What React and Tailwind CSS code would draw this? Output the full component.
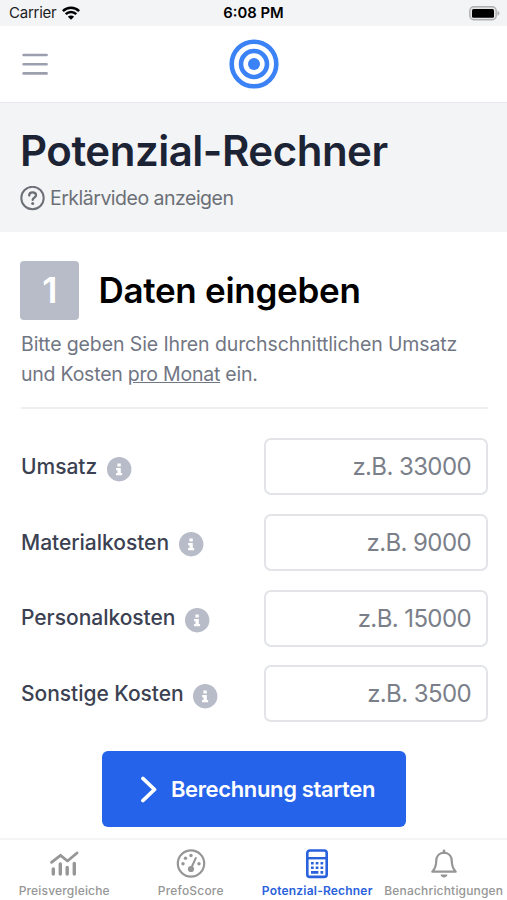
import React from 'react';

const fields = [
  { label: 'Umsatz', placeholder: 'z.B. 33000' },
  { label: 'Materialkosten', placeholder: 'z.B. 9000' },
  { label: 'Personalkosten', placeholder: 'z.B. 15000' },
  { label: 'Sonstige Kosten', placeholder: 'z.B. 3500' },
];

function StatusBar() {
  return (
    <div className="grid grid-cols-3 items-center h-[26px] pl-[9px] pr-[7px] pt-px bg-[#f3f4f6] text-[15px] text-[#1c1c1e]">
      <div className="flex items-center gap-[6px]">
        <span className="tracking-[-0.25px]">Carrier</span>
        <svg className="-mt-px" width="18" height="14" viewBox="0 0 18 14" fill="none" stroke="#000" strokeWidth="2.5">
          <path d="M.9 5.1a11.5 11.5 0 0 1 16.2 0" />
          <path d="M3.7 8.1a7.6 7.6 0 0 1 10.6 0" />
          <path d="M9 13.8 5.9 10.7a4.4 4.4 0 0 1 6.2 0z" fill="#000" stroke="none" />
        </svg>
      </div>
      <span className="-ml-[2px] text-center font-semibold text-[14.8px] text-black whitespace-nowrap">6:08 PM</span>
      <div className="flex justify-end">
        <svg width="31" height="15" viewBox="0 0 31 15">
          <rect x=".8" y=".8" width="26.4" height="13" rx="4" fill="#e5e5e7" stroke="#b0b0b2" strokeWidth="1.4" />
          <rect x="3" y="3" width="22" height="8.8" rx="1.5" fill="#000" />
          <path d="M28.5 4.8c2.6 1 2.6 4 0 5z" fill="#b0b0b2" />
        </svg>
      </div>
    </div>
  );
}

function Header() {
  return (
    <header className="grid grid-cols-3 items-center h-[77px] px-[21px] border-b border-[#e5e7eb] bg-white">
      <svg width="28" height="24" viewBox="0 0 28 24" stroke="#9ca0ae" strokeWidth="2.6" strokeLinecap="round">
        <path d="M2.6 3h23M2.6 12.2h23M2.6 21.4h23" />
      </svg>
      <svg className="justify-self-center" width="50" height="50" viewBox="0 0 50 50" fill="none" stroke="#3b82f6">
        <circle cx="25" cy="25" r="22.3" strokeWidth="4.6" />
        <circle cx="25" cy="25" r="13" strokeWidth="4.6" />
        <circle cx="25" cy="25" r="6" fill="#3b82f6" stroke="none" />
      </svg>
    </header>
  );
}

function InfoIcon() {
  return (
    <svg className="mt-[5px]" width="25" height="25" viewBox="0 0 25 25">
      <circle cx="12.2" cy="12.2" r="12.2" fill="#b8bcc8" />
      <path d="M10.4 6.5h3.4v3h-3.400zM9.100 10.900h4.700v5h1.300v2.400H9.100v-2.400h1.400v-2.600H9.100z" fill="#fff" />
    </svg>
  );
}

function Field({ label, placeholder }) {
  return (
    <div className="flex items-center justify-between">
      <label className="flex items-center gap-[9.5px] text-[21px] font-medium text-[#3b4152] whitespace-nowrap">
        <span className="tracking-[-0.03px]">{label}</span>
        <InfoIcon />
      </label>
      <input
        className="w-[224.5px] h-[57px] px-[15px] rounded-[7px] border-2 border-[#e2e4e7] bg-white text-right text-[24px] tracking-[-0.6px] placeholder:text-[#7b7f89] placeholder:opacity-100"
        placeholder={placeholder}
      />
    </div>
  );
}

function ChartIcon() {
  return (
    <svg width="30" height="30" viewBox="0 0 30 30" fill="none" stroke="currentColor">
      <path d="m2.5 13.3 9-7 7 5.7L28 4" strokeWidth="2.8" strokeLinecap="round" strokeLinejoin="round" />
      <path d="M4.3 20v5M11.300 15v10M18.200 18.500v6.500M25.300 14.500v10.500" strokeWidth="3.400" strokeLinecap="round" />
    </svg>
  );
}

function GaugeIcon() {
  return (
    <svg width="30" height="30" viewBox="0 0 30 30" fill="none" stroke="currentColor">
      <circle cx="15" cy="14.5" r="13.2" strokeWidth="2.2" />
      <path d="m15.500 18.500 4.300-9.500" strokeWidth="2" strokeLinecap="round" />
      <g fill="currentColor" stroke="none">
        <circle cx="15" cy="20" r="3.1" />
        <circle cx="7" cy="14.8" r="1.700" />
        <circle cx="9.500" cy="9.200" r="1.700" />
        <circle cx="15" cy="6.500" r="1.700" />
        <circle cx="23" cy="14.800" r="1.700" />
      </g>
    </svg>
  );
}

function CalculatorIcon() {
  return (
    <svg width="30" height="30" viewBox="0 0 30 30" fill="none" stroke="currentColor">
      <rect x="5.300" y="1.500" width="19.400" height="26.400" rx="2.500" strokeWidth="2.600" />
      <path d="M5 9.200h20" strokeWidth="2.400" />
      <path d="M9 14.200h2.700M13.700 14.200h2.700M18.500 14.200h2.700M9 18.700h2.700M13.700 18.700h2.700M18.500 18.700h2.700M9 23.400h7.400M18.500 23.400h2.700" strokeWidth="2.600" />
    </svg>
  );
}

function BellIcon() {
  return (
    <svg width="30" height="30" viewBox="0 0 30 30" fill="none" stroke="currentColor">
      <path d="M15 3.700c-5.500.3-7.800 4.300-7.800 8.600 0 5-1 7.200-3.900 10.400h23.400c-2.900-3.200-3.900-5.400-3.900-10.400 0-4.300-2.300-8.300-7.800-8.600z" strokeWidth="2.200" strokeLinejoin="round" />
      <path d="M15 1.800v2" strokeWidth="2.600" strokeLinecap="round" />
      <path d="M11.500 25.500h7c-.4 1.900-1.700 3-3.500 3s-3.100-1.100-3.500-3z" fill="currentColor" stroke="none" />
    </svg>
  );
}

const tabs = [
  { label: 'Preisvergleiche', Icon: ChartIcon },
  { label: 'PrefoScore', Icon: GaugeIcon },
  { label: 'Potenzial-Rechner', Icon: CalculatorIcon, active: true },
  { label: 'Benachrichtigungen', Icon: BellIcon },
];

function TabBar() {
  return (
    <nav className="grid grid-cols-4 h-[62px] pl-px pt-[9px] border-t-2 border-[#f3f4f6] bg-white">
      {tabs.map(({ label, Icon, active }) => (
        <div key={label} className={`flex flex-col items-center min-w-0 ${active ? 'text-[#2a61dc]' : 'text-[#969696]'}`}>
          <Icon />
          <span className={`mt-[3px] text-[12px] leading-[18px] whitespace-nowrap ${active ? 'font-semibold tracking-[0.2px]' : 'font-medium tracking-[0.18px]'}`}>
            {label}
          </span>
        </div>
      ))}
    </nav>
  );
}

export default function App() {
  return (
    <div className="flex flex-col w-[507px] h-[900px] overflow-hidden bg-white font-['Inter',sans-serif]">
      <StatusBar />
      <Header />

      {/* Page title */}
      <section className="h-[129px] px-5 pt-[22px] bg-[#f3f4f6]">
        <h1 className="text-[42px] leading-[52px] font-semibold tracking-[-0.48px] text-[#1b2334] whitespace-nowrap">Potenzial-Rechner</h1>
        <div className="flex items-center gap-[5px] mt-[8px] text-[#6b7077]">
          <svg width="25" height="25" viewBox="0 0 25 25" fill="none" stroke="currentColor" strokeWidth="2">
            <circle cx="12.5" cy="12" r="11.2" />
            <path d="M9.200 9.500c0-2 1.400-3.200 3.400-3.200s3.400 1.200 3.400 2.900c0 2.400-3.300 2.400-3.300 4.700" strokeWidth="2.300" strokeLinecap="round" />
            <circle cx="12.700" cy="17.500" r="1.500" fill="currentColor" stroke="none" />
          </svg>
          <span className="text-[19.5px] leading-[26px] tracking-[-0.5px]">Erklärvideo anzeigen</span>
        </div>
      </section>

      <main className="flex-1 flex flex-col pl-[21px] pr-[19px] pt-[29px]">
        <div className="flex items-center gap-[19px]">
          <div className="flex items-center justify-center w-[59px] h-[59px] -ml-[0.6px] rounded-[4px] bg-[#b8bcc8] text-white text-[36px] leading-[54px] pb-[2px] font-semibold">1</div>
          <h2 className="-mt-[2px] text-[35px] leading-[44px] font-semibold tracking-[-0.28px] text-black whitespace-nowrap">Daten eingeben</h2>
        </div>
        <p className="mt-[10px] pb-[18px] border-b-2 border-[#eceef0] text-[19.5px] leading-[29.5px] tracking-[-0.11px] text-[#717684] whitespace-nowrap">
          Bitte geben Sie Ihren durchschnittlichen Umsatz<br />
          <span className="tracking-[-0.23px]">und Kosten <span className="underline">pro Monat</span> ein.</span>
        </p>
        <form className="flex flex-col gap-[18.8px] mt-[29px]">
          {fields.map((f) => <Field key={f.label} {...f} />)}
          <button type="button" className="flex items-center justify-center self-center gap-[13px] mt-[10px] mr-[2px] pl-[8px] w-[304px] h-[76px] rounded-[6px] bg-[#2563eb] text-white">
            <svg width="18" height="27" viewBox="0 0 18 27" fill="none" stroke="currentColor" strokeWidth="3.8" strokeLinecap="round" strokeLinejoin="round">
              <path d="M3 2.5 14.5 13.5 3 24.5" />
            </svg>
            <span className="text-[22px] font-semibold tracking-[-0.35px] whitespace-nowrap">Berechnung starten</span>
          </button>
        </form>
      </main>

      <TabBar />
    </div>
  );
}
